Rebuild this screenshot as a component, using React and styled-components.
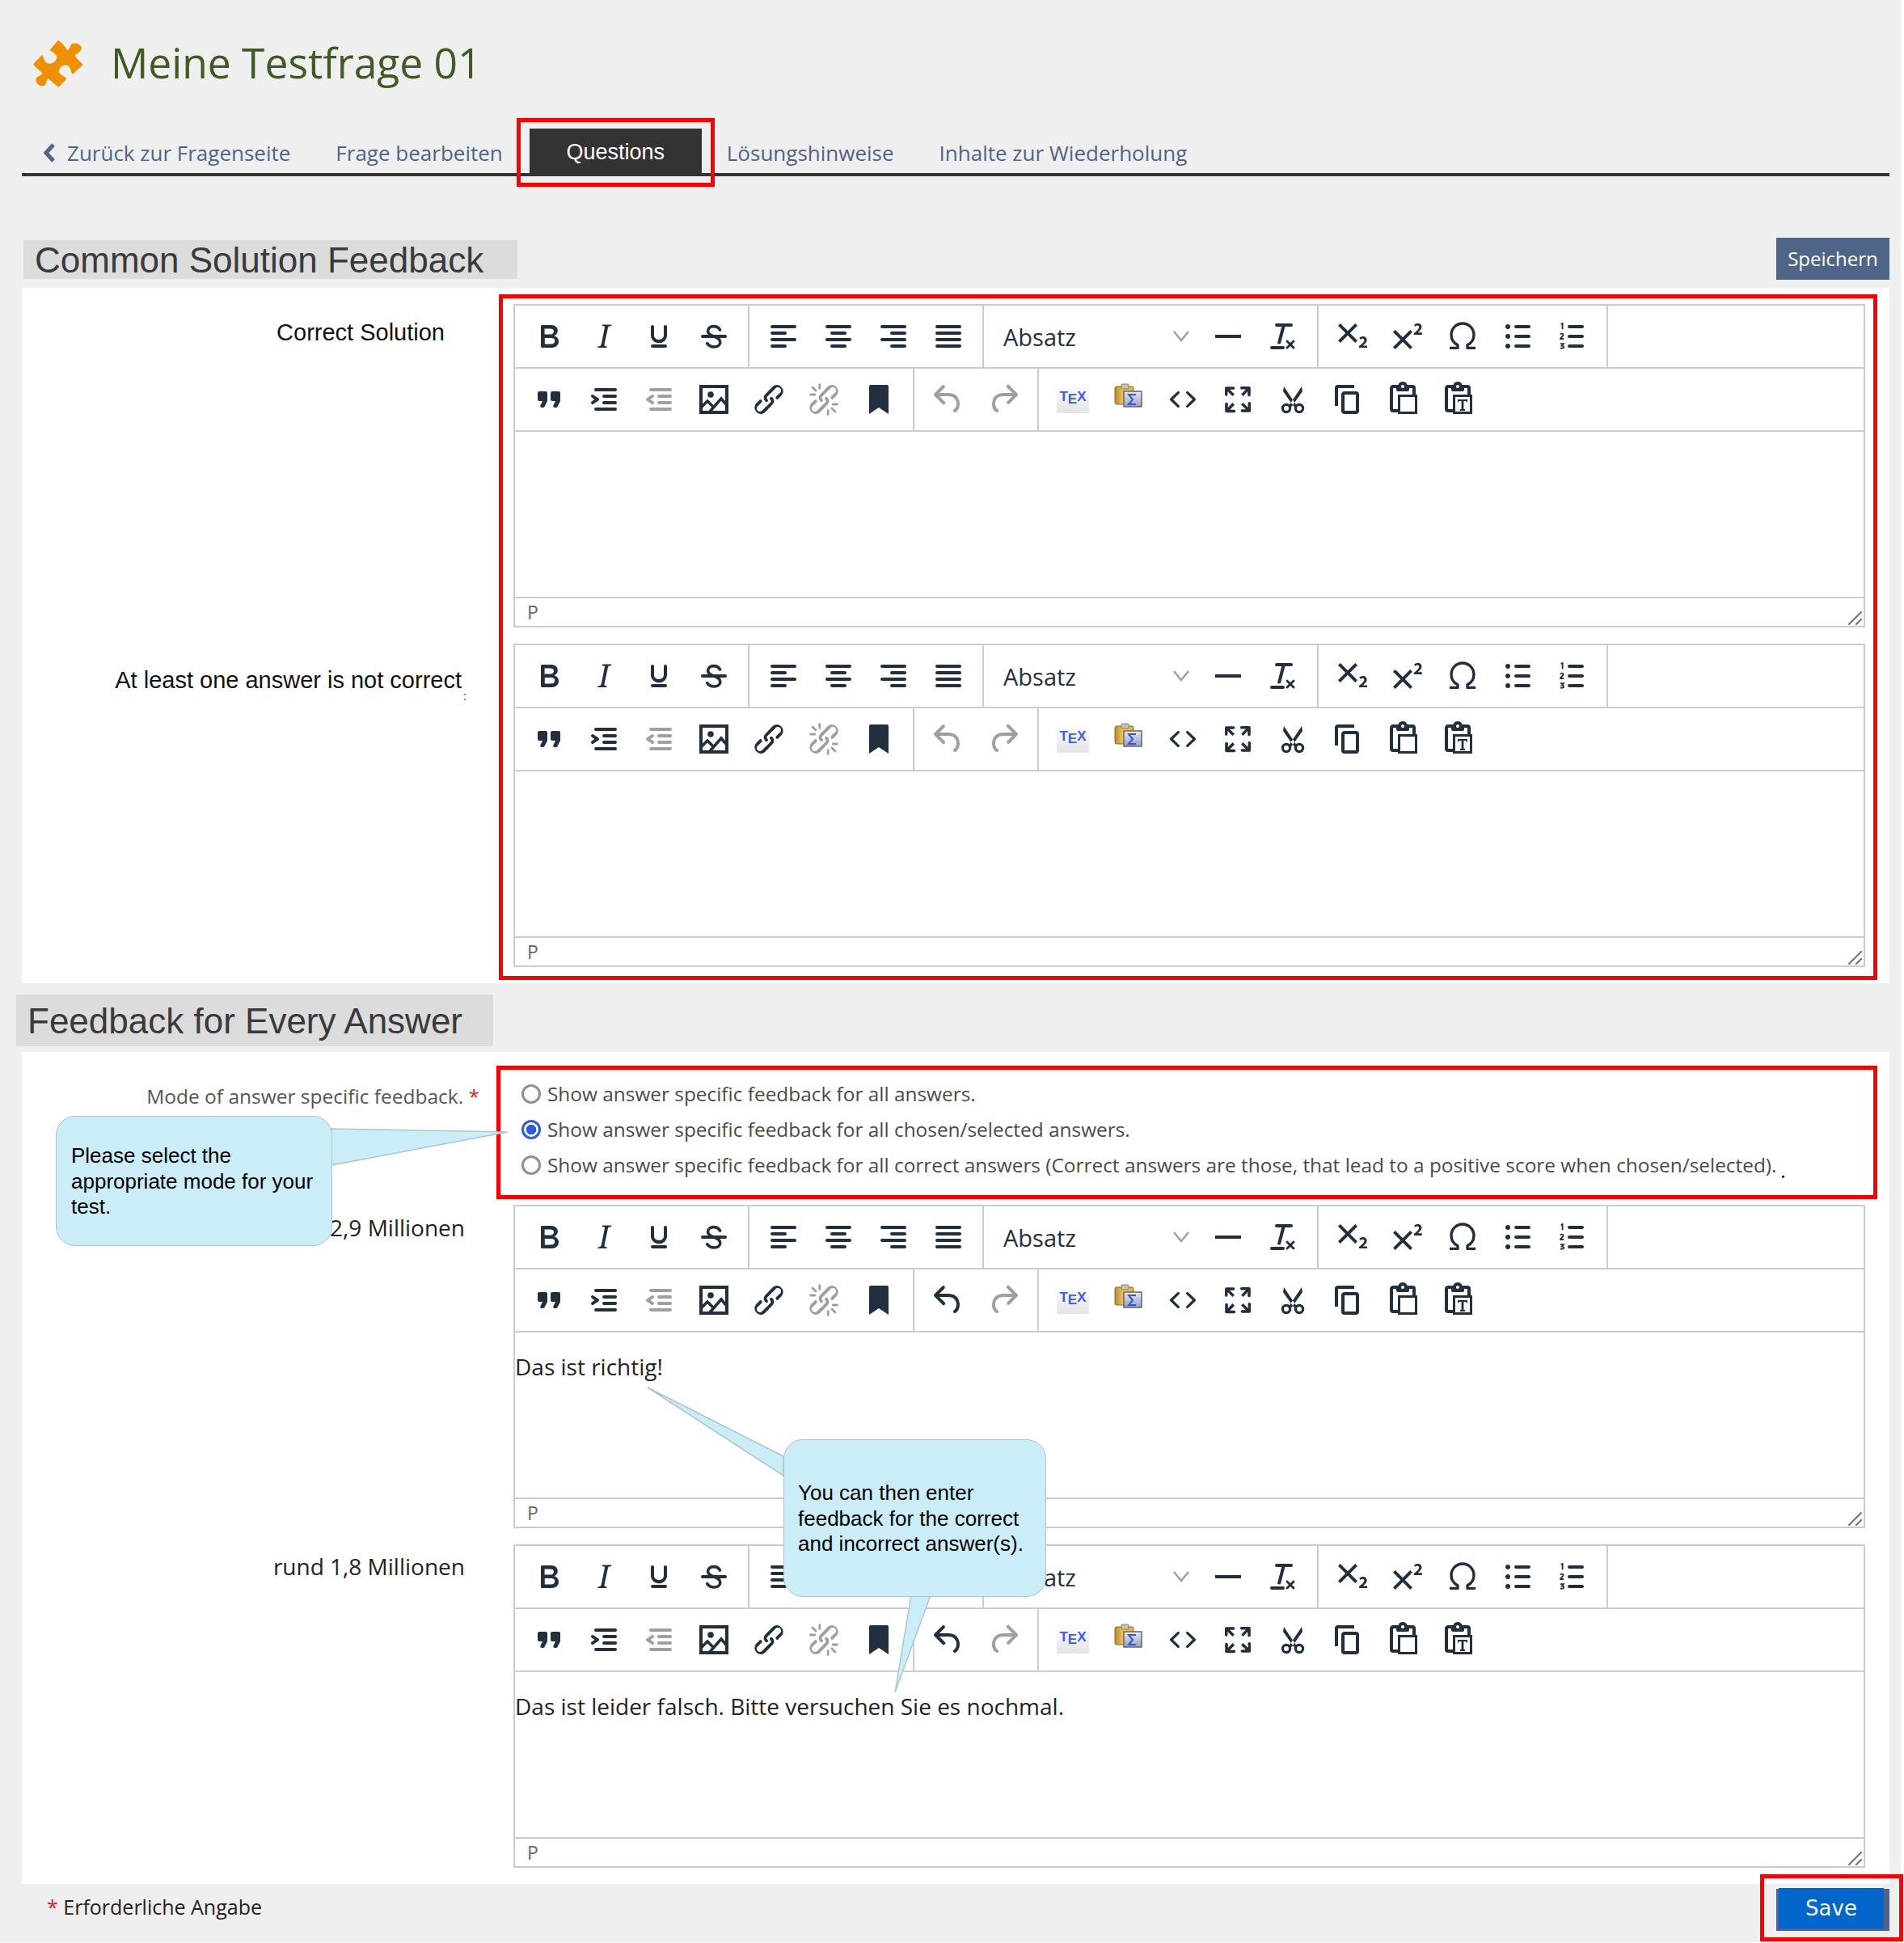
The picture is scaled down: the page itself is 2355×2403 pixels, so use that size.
import React from 'react';
import styled, { createGlobalStyle } from 'styled-components';

const GlobalStyle = createGlobalStyle`
  body {
    margin: 0;
    background: #ffffff;
    font-family: 'Open Sans', sans-serif;
  }
`;

const P = {
  bold: 'M7.8 19c-.3 0-.5 0-.6-.2l-.2-.5V5.7c0-.2 0-.4.2-.5l.6-.2h5c1.5 0 2.7.3 3.5 1 .7.6 1.1 1.4 1.1 2.5a3 3 0 0 1-.6 1.9c-.4.6-1 1-1.6 1.2.4.1.9.3 1.3.6s.8.7 1 1.2c.4.4.5 1 .5 1.6 0 1.3-.4 2.3-1.3 3-.8.7-2.1 1-3.8 1H7.8zm5-8.3c.6 0 1.2-.1 1.6-.5.4-.3.6-.7.6-1.3 0-1.1-.8-1.7-2.4-1.7H9.3v3.5h3.4zm.5 6c.7 0 1.3-.1 1.7-.4.4-.4.6-.9.6-1.5s-.2-1-.7-1.4c-.4-.3-1-.4-2-.4H9.4v3.8h4z',
  italic: 'M16.7 4.7l-.1.9h-.3c-.6 0-1 0-1.4.3-.3.3-.4.6-.5 1.1l-2.1 9.8v.6c0 .5.4.8 1.4.8h.2l-.2.8H8l.2-.8h.2c1.1 0 1.8-.5 2-1.5l2-9.8.1-.5c0-.6-.4-.8-1.4-.8h-.3l.2-.9h5.8z',
  underline: 'M16 5c.6 0 1 .4 1 1v5.5a4 4 0 0 1-.4 1.8l-1 1.4a5.3 5.3 0 0 1-5.5 1 5 5 0 0 1-1.6-1c-.5-.4-.8-.9-1.1-1.4a4 4 0 0 1-.4-1.8V6c0-.6.4-1 1-1s1 .4 1 1v5.5c0 .3 0 .6.2 1l.6.7a3.3 3.3 0 0 0 2.2.8 3.4 3.4 0 0 0 2.2-.8c.3-.2.4-.5.6-.8l.2-.9V6c0-.6.4-1 1-1zM8 17h8c.6 0 1 .4 1 1s-.4 1-1 1H8a1 1 0 0 1 0-2z',
  alignLeft: 'M5 5h14c.6 0 1 .4 1 1s-.4 1-1 1H5a1 1 0 1 1 0-2zm0 4h8c.6 0 1 .4 1 1s-.4 1-1 1H5a1 1 0 1 1 0-2zm0 8h8c.6 0 1 .4 1 1s-.4 1-1 1H5a1 1 0 0 1 0-2zm0-4h14c.6 0 1 .4 1 1s-.4 1-1 1H5a1 1 0 0 1 0-2z',
  alignCenter: 'M5 5h14c.6 0 1 .4 1 1s-.4 1-1 1H5a1 1 0 1 1 0-2zm3 4h8c.6 0 1 .4 1 1s-.4 1-1 1H8a1 1 0 1 1 0-2zm0 8h8c.6 0 1 .4 1 1s-.4 1-1 1H8a1 1 0 0 1 0-2zm-3-4h14c.6 0 1 .4 1 1s-.4 1-1 1H5a1 1 0 0 1 0-2z',
  alignRight: 'M5 5h14c.6 0 1 .4 1 1s-.4 1-1 1H5a1 1 0 1 1 0-2zm6 4h8c.6 0 1 .4 1 1s-.4 1-1 1h-8a1 1 0 0 1 0-2zm0 8h8c.6 0 1 .4 1 1s-.4 1-1 1h-8a1 1 0 0 1 0-2zm-6-4h14c.6 0 1 .4 1 1s-.4 1-1 1H5a1 1 0 0 1 0-2z',
  alignJustify: 'M5 5h14c.6 0 1 .4 1 1s-.4 1-1 1H5a1 1 0 1 1 0-2zm0 4h14c.6 0 1 .4 1 1s-.4 1-1 1H5a1 1 0 1 1 0-2zm0 4h14c.6 0 1 .4 1 1s-.4 1-1 1H5a1 1 0 0 1 0-2zm0 4h14c.6 0 1 .4 1 1s-.4 1-1 1H5a1 1 0 0 1 0-2z',
  hr: 'M4 11h16v2H4z',
  clear: 'M13.2 6l-2.6 10a1 1 0 0 1-1 .8h-.2a.8.8 0 0 1-.8-1l2.5-9.8H8a1 1 0 1 1 0-2h9a1 1 0 0 1 0 2h-3.8zM5 18h7a1 1 0 0 1 0 2H5a1 1 0 0 1 0-2zm13 1.5L16.5 18 15 19.5a.7.7 0 0 1-1-1l1.5-1.5-1.5-1.5a.7.7 0 0 1 1-1l1.5 1.5 1.5-1.5a.7.7 0 0 1 1 1L17.5 17l1.5 1.5a.7.7 0 0 1-1 1z',
  sub: 'M10.4 10l4.6 4.6-1.4 1.4L9 11.4 4.4 16 3 14.6 7.6 10 3 5.4 4.4 4 9 8.6 13.6 4 15 5.4 10.4 10zM21 19h-5v-1l1-.8 1.7-1.6c.3-.4.5-.8.5-1.2 0-.3 0-.6-.2-.7-.2-.2-.5-.3-.9-.3a2 2 0 0 0-.8.2l-.7.3-.4-1.1 1-.6 1.2-.2c.8 0 1.4.3 1.8.7.4.4.6.9.6 1.5s-.2 1.1-.5 1.6a8 8 0 0 1-1.3 1.3l-.6.6h2.6V19z',
  sup: 'M15 9.4L10.4 14l4.6 4.6-1.4 1.4L9 15.4 4.4 20 3 18.6 7.6 14 3 9.4 4.4 8 9 12.6 13.6 8 15 9.4zm5.9 1.6h-5v-1l1-.8 1.7-1.6c.3-.5.5-.9.5-1.3 0-.3 0-.5-.2-.7-.2-.2-.5-.3-.9-.3l-.8.2-.7.4-.4-1.2c.2-.2.5-.4 1-.5.3-.2.8-.2 1.2-.2.8 0 1.4.2 1.8.6.4.4.6 1 .6 1.6 0 .5-.2 1-.5 1.5l-1.3 1.4-.6.5h2.6V11z',
  bullets: 'M11 5h8c.6 0 1 .4 1 1s-.4 1-1 1h-8a1 1 0 0 1 0-2zm0 6h8c.6 0 1 .4 1 1s-.4 1-1 1h-8a1 1 0 0 1 0-2zm0 6h8c.6 0 1 .4 1 1s-.4 1-1 1h-8a1 1 0 0 1 0-2zM4.5 6c0-.4.1-.8.4-1 .3-.4.7-.5 1.1-.5s.8.1 1 .4c.4.3.5.7.5 1.1s-.1.8-.4 1c-.3.4-.7.5-1.1.5s-.8-.1-1-.4c-.4-.3-.5-.7-.5-1.1zm0 6c0-.4.1-.8.4-1 .3-.4.7-.5 1.1-.5s.8.1 1 .4c.4.3.5.7.5 1.1s-.1.8-.4 1c-.3.4-.7.5-1.1.5s-.8-.1-1-.4c-.4-.3-.5-.7-.5-1.1zm0 6c0-.4.1-.8.4-1 .3-.4.7-.5 1.1-.5s.8.1 1 .4c.4.3.5.7.5 1.1s-.1.8-.4 1c-.3.4-.7.5-1.1.5s-.8-.1-1-.4c-.4-.3-.5-.7-.5-1.1z',
  numLines: 'M10 17h8c.6 0 1 .4 1 1s-.4 1-1 1h-8a1 1 0 0 1 0-2zm0-6h8c.6 0 1 .4 1 1s-.4 1-1 1h-8a1 1 0 0 1 0-2zm0-6h8c.6 0 1 .4 1 1s-.4 1-1 1h-8a1 1 0 1 1 0-2z',
  quote: 'M7.5 17h.9c.4 0 .7-.2.9-.6L11 13V8c0-.6-.4-1-1-1H6a1 1 0 0 0-1 1v4c0 .6.4 1 1 1h2l-1.3 2.7a1 1 0 0 0 .8 1.3zm8 0h.9c.4 0 .7-.2.9-.6L19 13V8c0-.6-.4-1-1-1h-4a1 1 0 0 0-1 1v4c0 .6.4 1 1 1h2l-1.3 2.7a1 1 0 0 0 .8 1.3z',
  indent: 'M7 5h12c.6 0 1 .4 1 1s-.4 1-1 1H7a1 1 0 1 1 0-2zm5 4h7c.6 0 1 .4 1 1s-.4 1-1 1h-7a1 1 0 0 1 0-2zm0 4h7c.6 0 1 .4 1 1s-.4 1-1 1h-7a1 1 0 0 1 0-2zm-5 4h12a1 1 0 0 1 0 2H7a1 1 0 0 1 0-2zm-2.6-3.8L6.2 12l-1.8-1.2a1 1 0 0 1 1.2-1.6l3 2a1 1 0 0 1 0 1.6l-3 2a1 1 0 1 1-1.2-1.6z',
  outdent: 'M7 5h12c.6 0 1 .4 1 1s-.4 1-1 1H7a1 1 0 1 1 0-2zm5 4h7c.6 0 1 .4 1 1s-.4 1-1 1h-7a1 1 0 0 1 0-2zm0 4h7c.6 0 1 .4 1 1s-.4 1-1 1h-7a1 1 0 0 1 0-2zm-5 4h12a1 1 0 0 1 0 2H7a1 1 0 0 1 0-2zm1.6-3.8a1 1 0 0 1-1.2 1.6l-3-2a1 1 0 0 1 0-1.6l3-2a1 1 0 0 1 1.2 1.6L6.8 12l1.8 1.2z',
  link: 'M6.2 12.3a1 1 0 0 1 1.4 1.4l-2 2a2 2 0 1 0 2.6 2.8l4.8-4.8a1 1 0 0 0 0-1.4 1 1 0 1 1 1.4-1.3 2.9 2.9 0 0 1 0 4L9.6 20a3.9 3.9 0 0 1-5.5-5.5l2-2zm11.6-.6a1 1 0 0 1-1.4-1.4l2-2a2 2 0 1 0-2.6-2.8L11 10.3a1 1 0 0 0 0 1.4A1 1 0 1 1 9.6 13a2.9 2.9 0 0 1 0-4L14.4 4a3.9 3.9 0 0 1 5.5 5.5l-2 2z',
  bookmark: 'M6 4v17l6-4 6 4V4c0-.6-.4-1-1-1H7a1 1 0 0 0-1 1z',
  undo: 'M6.4 8H12c3.7 0 6.2 2 6.8 5.1.6 2.7-.4 5.6-2.3 6.8a1 1 0 0 1-1-1.8c1.1-.7 1.8-2.7 1.4-4.6-.5-2.1-2.1-3.5-4.9-3.5H6.4l3.3 3.3a1 1 0 1 1-1.4 1.4l-5-5a1 1 0 0 1 0-1.4l5-5a1 1 0 0 1 1.4 1.4L6.4 8z',
  redo: 'M17.6 10H12c-2.8 0-4.4 1.4-4.9 3.5-.4 2 .3 3.9 1.4 4.6a1 1 0 1 1-1 1.8c-2-1.2-2.9-4.1-2.3-6.8.6-3 3-5.1 6.8-5.1h5.6l-3.3-3.3a1 1 0 1 1 1.4-1.4l5 5a1 1 0 0 1 0 1.4l-5 5a1 1 0 0 1-1.4-1.4l3.3-3.3z',
  code: 'M9.8 15.7c.3.3.3.8 0 1-.3.4-.9.4-1.2 0l-4.4-4.1a.8.8 0 0 1 0-1.2l4.4-4.2c.3-.3.9-.3 1.2 0 .3.3.3.8 0 1.1L6 12l3.8 3.7zm4.4 0l3.8-3.7-3.8-3.7a.8.8 0 0 1 0-1.1c.3-.3.9-.3 1.2 0l4.4 4.2c.3.3.3.9 0 1.2l-4.4 4.1c-.3.4-.9.4-1.2 0a.8.8 0 0 1 0-1z',
  fullscreen: 'M15.3 10l-1.2-1.3 2.9-3h-2.3a.9.9 0 1 1 0-1.7H19c.5 0 .9.4.9.9v4.4a.9.9 0 1 1-1.8 0V7l-2.8 3zm0 4l3 3v-2.3a.9.9 0 1 1 1.7 0V19c0 .5-.4.9-.9.9h-4.4a.9.9 0 1 1 0-1.8H17l-3-2.9 1.3-1.2zM10 15.4l-2.9 3h2.3a.9.9 0 1 1 0 1.7H5a.9.9 0 0 1-.9-.9v-4.4a.9.9 0 1 1 1.8 0V17l2.9-3 1.2 1.4zM8.7 10L5.7 7v2.3a.9.9 0 0 1-1.7 0V5c0-.5.4-.9.9-.9h4.4a.9.9 0 0 1 0 1.8H7l3 2.9-1.3 1.2z',
  copy: 'M16 3H6a2 2 0 0 0-2 2v11h2V5h10V3zm1 4a2 2 0 0 1 2 2v10a2 2 0 0 1-2 2h-7a2 2 0 0 1-2-2V9c0-1.2.9-2 2-2h7zm0 12V9h-7v10h7z',
  paste: 'M18 9V5h-2v1c0 .6-.4 1-1 1H9a1 1 0 0 1-1-1V5H6v13h3V9h9zM9 20H6a2 2 0 0 1-2-2V5c0-1.1.9-2 2-2h3.2A3 3 0 0 1 12 1a3 3 0 0 1 2.8 2H18a2 2 0 0 1 2 2v4h1v12H9v-1zm1.5-9.5v9h9v-9h-9zM12 3a1 1 0 0 0-1 1c0 .5.4 1 1 1s1-.5 1-1-.4-1-1-1z',
};

function Glyph({ d, children }) {
  return (
    <svg width="48" height="48" viewBox="0 0 24 24" fill="currentColor">
      {d && <path d={d} fillRule="evenodd" />}
      {children}
    </svg>
  );
}

function PasteMathIcon() {
  return (
    <BlurredIcon width="48" height="48" viewBox="0 0 48 48">
      <defs>
        <linearGradient id="clipFill" x1="0" y1="0" x2="1" y2="0">
          <stop offset="0" stopColor="#b98a30" />
          <stop offset="0.5" stopColor="#f4cd60" />
          <stop offset="1" stopColor="#e0a93a" />
        </linearGradient>
        <linearGradient id="sigmaFill" x1="0" y1="0" x2="0" y2="1">
          <stop offset="0" stopColor="#e6ebf4" />
          <stop offset="1" stopColor="#8fa2c9" />
        </linearGradient>
      </defs>
      <rect x="8" y="10" width="23" height="22" rx="2" fill="url(#clipFill)" stroke="#8a6d2b" />
      <rect x="16" y="7" width="9" height="6" rx="1" fill="#c9c2ac" stroke="#8a7f5d" />
      <rect x="19" y="16" width="22" height="19" fill="url(#sigmaFill)" stroke="#6b6560" strokeWidth="1.500" />
      <path d="M34 20h-9l5 6-5 6h9" fill="none" stroke="#3a55c8" strokeWidth="2" />
    </BlurredIcon>
  );
}

const lineProps = { fill: 'none', stroke: 'currentColor', strokeWidth: 1.8, strokeLinecap: 'round', strokeLinejoin: 'round' };

const icons = {
  bold: <Glyph d={P.bold} />,
  italic: <Glyph d={P.italic} />,
  underline: <Glyph d={P.underline} />,
  strike: (
    <Glyph>
      <path {...lineProps} d="M15.8 8c-.8-1.400-2.200-2.200-3.900-2.200-2.300 0-3.600 1.300-3.600 2.900 0 1.700 1.500 2.500 3.700 3.300 2.600.9 3.900 2 3.900 3.600 0 1.700-1.500 2.900-3.800 2.900-1.900 0-3.300-.8-4.300-2.200" />
      <path d="M5 11h14c.6 0 1 .4 1 1s-.4 1-1 1H5a1 1 0 0 1 0-2z" />
    </Glyph>
  ),
  alignLeft: <Glyph d={P.alignLeft} />,
  alignCenter: <Glyph d={P.alignCenter} />,
  alignRight: <Glyph d={P.alignRight} />,
  alignJustify: <Glyph d={P.alignJustify} />,
  hr: <Glyph d={P.hr} />,
  clear: <Glyph d={P.clear} />,
  sub: <Glyph d={P.sub} />,
  sup: <Glyph d={P.sup} />,
  omega: (
    <Glyph>
      <path {...lineProps} strokeLinecap="butt" strokeWidth="1.7" d="M4 19.200h5v-1.800C6.500 16.100 5 13.800 5 11a7 7 0 0 1 14 0c0 2.800-1.500 5.100-4 6.400v1.800h5" />
    </Glyph>
  ),
  bullets: <Glyph d={P.bullets} />,
  numbers: (
    <Glyph d={P.numLines}>
      <path fill="none" stroke="currentColor" strokeWidth="0.9" d="M4.800 4.500l1-.5v3.600M4.500 10.800c.2-.6 1.800-.7 1.800.3 0 .9-1.800 1.400-1.800 2.400h2M4.500 16.600h1.900l-1 1.200c1 0 1.200.4 1.200.8 0 .8-1.400 1-2.100.5" />
    </Glyph>
  ),
  quote: <Glyph d={P.quote} />,
  indent: <Glyph d={P.indent} />,
  outdent: <Glyph d={P.outdent} />,
  image: (
    <Glyph>
      <rect x="4" y="4" width="16" height="16" fill="none" stroke="currentColor" strokeWidth="2" />
      <circle cx="10" cy="9" r="1.900" />
      <path {...lineProps} strokeLinecap="butt" strokeLinejoin="miter" d="M4.500 16.500l3.500-3.500 4 4M9.500 19.500l7-8 3 3.500" />
    </Glyph>
  ),
  link: <Glyph d={P.link} />,
  unlink: (
    <Glyph d={P.link}>
      <path {...lineProps} strokeWidth="1.400" d="M5 4.500l2 2M3.800 9h2.600M9.400 2.800v2.400M19 19.500l-2-2M20.200 15h-2.600M14.600 21.200v-2.400" />
    </Glyph>
  ),
  bookmark: <Glyph d={P.bookmark} />,
  undo: <Glyph d={P.undo} />,
  redo: <Glyph d={P.redo} />,
  code: <Glyph d={P.code} />,
  fullscreen: <Glyph d={P.fullscreen} />,
  cut: (
    <Glyph>
      <circle cx="8" cy="17.500" r="2.300" fill="none" stroke="currentColor" strokeWidth="1.600" />
      <circle cx="16" cy="17.500" r="2.300" fill="none" stroke="currentColor" strokeWidth="1.600" />
      <path d="M6.500 4l7.700 11.500-1.500 1L6 7zM17.500 4l-7.700 11.500 1.500 1L18 7z" />
    </Glyph>
  ),
  copy: <Glyph d={P.copy} />,
  paste: <Glyph d={P.paste} />,
  pasteText: (
    <Glyph d={P.paste}>
      <path d="M12 12h6v1.800h-.7v-.8h-1.600v5h.8v1h-3v-1h.8v-5h-1.600v.8H12z" />
    </Glyph>
  ),
  pasteMath: <PasteMathIcon />,
};

const GROUPS_TOP = [
  [['bold'], ['italic'], ['underline'], ['strike']],
  [['alignLeft'], ['alignCenter'], ['alignRight'], ['alignJustify']],
  ['select', ['hr'], ['clear']],
  [['sub'], ['sup'], ['omega'], ['bullets'], ['numbers']],
];

function Btn({ name, off }) {
  return <IconButton $off={off}>{icons[name]}</IconButton>;
}

function Editor({ undoOn, text }) {
  return (
    <EditorBox>
      <ToolRow>
        {GROUPS_TOP.map((group, i) => (
          <ToolGroup key={i}>
            {group.map((item, j) =>
              item === 'select' ? (
                <BlockSelect key={j}>
                  Absatz
                  <SelectArrow width="24" height="24" viewBox="0 0 24 24">
                    <path d="M3 6l9 11 9-11" fill="none" stroke="currentColor" strokeWidth="2.400" />
                  </SelectArrow>
                </BlockSelect>
              ) : (
                <Btn key={j} name={item[0]} />
              )
            )}
          </ToolGroup>
        ))}
      </ToolRow>
      <ToolRow>
        <ToolGroup>
          <Btn name="quote" />
          <Btn name="indent" />
          <Btn name="outdent" off />
          <Btn name="image" />
          <Btn name="link" />
          <Btn name="unlink" off />
          <Btn name="bookmark" />
        </ToolGroup>
        <ToolGroup>
          <Btn name="undo" off={!undoOn} />
          <Btn name="redo" off />
        </ToolGroup>
        <ToolGroup>
          <IconButton>
            <TexIcon>
              T<TexE>E</TexE>X
            </TexIcon>
          </IconButton>
          <Btn name="pasteMath" />
          <Btn name="code" />
          <Btn name="fullscreen" />
          <Btn name="cut" />
          <Btn name="copy" />
          <Btn name="paste" />
          <Btn name="pasteText" />
        </ToolGroup>
      </ToolRow>
      <EditArea>{text}</EditArea>
      <StatusBar>
        P
        <ResizeHandle width="20" height="20" viewBox="0 0 20 20">
          <path d="M2 18L17 3M11 18l6-6" stroke="#6f7780" strokeWidth="2.200" fill="none" strokeLinecap="round" />
        </ResizeHandle>
      </StatusBar>
    </EditorBox>
  );
}

export default function App() {
  return (
    <Page>
      <GlobalStyle />
      <TitleRow>
        <svg width="90" height="80" viewBox="0 0 270 240">
          <path
            fill="#f09000"
            d="M125 30C135 32 155 55 158 65C165 70 170 55 172 48C180 35 205 40 212 55C216 70 195 78 188 85C190 95 210 110 218 120L180 155C172 150 175 130 160 122C140 118 125 135 130 150C135 160 155 165 157 172L128 203C115 195 100 180 88 172C80 178 85 190 75 197C60 205 42 190 43 175C45 162 65 160 67 153C60 143 40 130 33 118L65 85C75 90 70 105 85 115C105 120 125 105 120 88C115 75 98 72 95 65Z"
          />
        </svg>
        <Title>Meine Testfrage 01</Title>
      </TitleRow>

      <Tabs>
        <Tab>
          <BackArrow width="16" height="24" viewBox="0 0 16 24">
            <path d="M13 2L4 12l9 10" fill="none" stroke="currentColor" strokeWidth="5" />
          </BackArrow>
          Zurück zur Fragenseite
        </Tab>
        <Tab>Frage bearbeiten</Tab>
        <ActiveTab>
          Questions
          <TabMark />
        </ActiveTab>
        <Tab>Lösungshinweise</Tab>
        <Tab>Inhalte zur Wiederholung</Tab>
      </Tabs>

      <HeadingRow>
        <SectionHeading $w={611} $h={48} $ml={2} $pl={14}>
          Common Solution Feedback
        </SectionHeading>
        <SaveTop>Speichern</SaveTop>
      </HeadingRow>

      <Panel>
        <HighlightBox $top={8} $left={590} $w={1705} $h={848} />
        <FormRow>
          <SansLabel $pr={85} $pt={19}>Correct Solution</SansLabel>
          <Editor />
        </FormRow>
        <FormRow>
          <SansLabel $pr={64} $pt={29}>
            At least one answer is not correct
            <StrayTick>:</StrayTick>
          </SansLabel>
          <Editor />
        </FormRow>
      </Panel>

      <SectionHeading $w={590} $h={64} $ml={-7} $mt={14} $pl={14}>
        Feedback for Every Answer
      </SectionHeading>

      <Panel $mt={7}>
        <HighlightBox $top={17} $left={587} $w={1708} $h={165} />
        <FormRow>
          <ModeLabel>
            Mode of answer specific feedback. <Required>*</Required>
          </ModeLabel>
          <RadioList>
            <RadioRow>
              <Radio />
              Show answer specific feedback for all answers.
            </RadioRow>
            <RadioRow>
              <Radio $on />
              Show answer specific feedback for all chosen/selected answers.
            </RadioRow>
            <RadioRow>
              <Radio />
              Show answer specific feedback for all correct answers (Correct answers are those, that lead to a positive score when chosen/selected).
              <StrayDot>.</StrayDot>
            </RadioRow>
          </RadioList>
        </FormRow>
        <FormRow>
          <AnswerLabel $pt={9}>2,9 Millionen</AnswerLabel>
          <Editor undoOn text="Das ist richtig!" />
        </FormRow>
        <FormRow>
          <AnswerLabel $pt={8}>rund 1,8 Millionen</AnswerLabel>
          <Editor undoOn text="Das ist leider falsch. Bitte versuchen Sie es nochmal." />
        </FormRow>

        <Tail $left={381} $top={93} width="224" height="52" viewBox="0 0 224 52">
          <polygon points="2,2 220,6 2,47" />
        </Tail>
        <Callout $left={42} $top={79} $w={342} $h={161} $pt={33} $pl={18}>
          Please select the
          <br />
          appropriate mode for your
          <br />
          test.
        </Callout>

        <Tail $left={772} $top={413} width="172" height="112" viewBox="0 0 172 112">
          <polygon points="2,2 170,87 170,111" />
        </Tail>
        <Tail $left={1078} $top={670} width="48" height="124" viewBox="0 0 48 124">
          <polygon points="22,2 46,2 2,122" />
        </Tail>
        <Callout $left={942} $top={479} $w={325} $h={195} $pt={50} $pl={17}>
          You can then enter
          <br />
          feedback for the correct
          <br />
          and incorrect answer(s).
        </Callout>
      </Panel>

      <FooterRow>
        <RequiredNote>
          <Required>*</Required> Erforderliche Angabe
        </RequiredNote>
        <SaveBack>
          <SaveHighlight />
          <SaveButton>Save</SaveButton>
        </SaveBack>
      </FooterRow>
    </Page>
  );
}

const Page = styled.div`
  position: relative;
  width: 2351px;
  height: 2402px;
  box-sizing: border-box;
  padding-left: 27px;
  background: #efefef;
`;

const TitleRow = styled.div`
  height: 159px;
  display: flex;
  align-items: center;
  padding-left: 3px;
`;

const Title = styled.h1`
  margin: -6px 0 0 17px;
  font-family: 'Open Sans', sans-serif;
  font-weight: 400;
  font-size: 51.5px;
  color: #3f5a22;
`;

const BlurredIcon = styled.svg`
  filter: blur(0.6px);
  margin-top: -4px;
`;

const Tabs = styled.div`
  width: 2310px;
  height: 59px;
  box-sizing: border-box;
  display: flex;
  border-bottom: 4px solid #333333;
`;

const Tab = styled.div`
  display: flex;
  align-items: center;
  gap: 14px;
  height: 60px;
  padding: 0 28px;
  font-size: 26px;
  color: #4f6587;
  &:first-child {
    padding-left: 26px;
  }
`;

const BackArrow = styled.svg`
  flex: none;
`;

const ActiveTab = styled.div`
  position: relative;
  width: 213px;
  height: 59px;
  margin: 0 3px 0 5px;
  box-sizing: border-box;
  background: #333333;
  color: #ffffff;
  display: flex;
  align-items: center;
  justify-content: center;
  font-family: 'Liberation Sans', sans-serif;
  font-size: 27px;
`;

const TabMark = styled.div`
  position: absolute;
  left: -16px;
  top: -13px;
  width: 245px;
  height: 85px;
  box-sizing: border-box;
  border: 5px solid #ff0000;
`;

const HeadingRow = styled.div`
  width: 2310px;
  margin-top: 76px;
  display: flex;
  justify-content: space-between;
  align-items: flex-start;
`;

const SectionHeading = styled.h2`
  box-sizing: border-box;
  width: ${(p) => p.$w}px;
  height: ${(p) => p.$h}px;
  margin: ${(p) => p.$mt || 3}px 0 0 ${(p) => p.$ml}px;
  padding-left: ${(p) => p.$pl}px;
  display: flex;
  align-items: center;
  background: #dcdcdc;
  color: #3a3a3a;
  font-family: 'Liberation Sans', sans-serif;
  font-weight: 400;
  font-size: 44px;
  line-height: 50px;
  padding-top: 2px;
`;

const SaveTop = styled.button`
  width: 140px;
  height: 52px;
  border: none;
  padding: 0 0 2px;
  background: #4f6587;
  color: #ffffff;
  font-family: 'Open Sans', sans-serif;
  font-size: 24px;
`;

const Panel = styled.div`
  position: relative;
  width: 2310px;
  margin-top: ${(p) => p.$mt || 10}px;
  padding: 20px 0;
  box-sizing: border-box;
  background: #ffffff;
  display: flex;
  flex-direction: column;
  gap: 20px;
`;

const HighlightBox = styled.div`
  position: absolute;
  top: ${(p) => p.$top}px;
  left: ${(p) => p.$left}px;
  width: ${(p) => p.$w}px;
  height: ${(p) => p.$h}px;
  box-sizing: border-box;
  border: 5px solid #ff0000;
`;

const FormRow = styled.div`
  display: grid;
  grid-template-columns: 608px 1672px;
`;

const SansLabel = styled.div`
  position: relative;
  text-align: right;
  padding: ${(p) => p.$pt}px ${(p) => p.$pr}px 0 0;
  font-family: 'Liberation Sans', sans-serif;
  font-size: 29px;
  line-height: 32px;
  color: #111111;
`;

const StrayTick = styled.span`
  position: absolute;
  right: 58px;
  top: 57px;
  font-size: 14px;
  line-height: 16px;
`;

const StrayDot = styled.span`
  position: absolute;
  left: 1567px;
  top: 108px;
  font-size: 26px;
  color: #111111;
`;

const ModeLabel = styled.div`
  text-align: right;
  padding: 18px 42px 0 0;
  font-size: 24.5px;
  line-height: 34px;
  color: #555555;
`;

const Required = styled.span`
  color: #e02020;
`;

const AnswerLabel = styled.div`
  text-align: right;
  padding: ${(p) => p.$pt}px 60px 0 0;
  font-size: 28px;
  line-height: 38px;
  color: #222222;
`;

const RadioList = styled.div`
  position: relative;
  padding: 9px 0 8px 10px;
  display: flex;
  flex-direction: column;
`;

const RadioRow = styled.div`
  height: 44px;
  display: flex;
  align-items: center;
  gap: 8px;
  font-size: 24.4px;
  color: #4a4a4a;
  white-space: nowrap;
`;

const Radio = styled.span`
  width: 24px;
  height: 24px;
  margin-top: 2px;
  box-sizing: border-box;
  flex: none;
  border-radius: 50%;
  border: 3px solid ${(p) => (p.$on ? '#2d5be3' : '#8f8f9d')};
  background: ${(p) => (p.$on ? 'radial-gradient(circle, #2d5be3 0 6px, #ffffff 6.500px)' : '#ffffff')};
`;

const EditorBox = styled.div`
  width: 1672px;
  height: 400px;
  box-sizing: border-box;
  border: 2px solid #cccccc;
  display: flex;
  flex-direction: column;
  background: #ffffff;
`;

const ToolRow = styled.div`
  height: 78px;
  flex: none;
  box-sizing: border-box;
  display: flex;
  border-bottom: 2px solid #cccccc;
`;

const ToolGroup = styled.div`
  display: flex;
  align-items: center;
  padding: 0 8px;
  border-right: 2px solid #cccccc;
  &:last-child {
    border-right: none;
  }
  ${ToolRow}:first-child &:last-child {
    border-right: 2px solid #cccccc;
  }
`;

const IconButton = styled.div`
  width: 68px;
  height: 68px;
  display: flex;
  align-items: center;
  justify-content: center;
  color: ${(p) => (p.$off ? '#9aa0a6' : '#222f3e')};
`;

const BlockSelect = styled.div`
  position: relative;
  width: 260px;
  height: 68px;
  box-sizing: border-box;
  padding-left: 16px;
  display: flex;
  align-items: center;
  font-size: 29px;
  color: #222f3e;
`;

const SelectArrow = styled.svg`
  position: absolute;
  left: 224px;
  top: 22px;
  color: #9aa0a6;
`;

const TexIcon = styled.div`
  width: 40px;
  height: 38px;
  margin-top: -4px;
  background: linear-gradient(#ffffff, #e4e4e4);
  color: #3d5bf0;
  font-family: 'Liberation Sans', sans-serif;
  font-size: 17px;
  font-weight: 700;
  text-align: center;
  line-height: 36px;
  white-space: nowrap;
`;

const TexE = styled.span`
  position: relative;
  top: 3px;
`;

const EditArea = styled.div`
  flex: 1;
  padding-top: 23px;
  font-size: 28px;
  line-height: 38px;
  color: #222222;
`;

const StatusBar = styled.div`
  position: relative;
  flex: none;
  height: 36px;
  box-sizing: border-box;
  border-top: 2px solid #cccccc;
  padding-left: 15px;
  display: flex;
  align-items: center;
  font-size: 23px;
  color: #666666;
`;

const ResizeHandle = styled.svg`
  position: absolute;
  right: 0;
  bottom: 0;
`;

const Tail = styled.svg`
  position: absolute;
  left: ${(p) => p.$left}px;
  top: ${(p) => p.$top}px;
  polygon {
    fill: #cbedf8;
    stroke: #a9c7cf;
    stroke-width: 1.500;
  }
`;

const Callout = styled.div`
  position: absolute;
  left: ${(p) => p.$left}px;
  top: ${(p) => p.$top}px;
  width: ${(p) => p.$w}px;
  height: ${(p) => p.$h}px;
  box-sizing: border-box;
  padding: ${(p) => p.$pt}px 0 0 ${(p) => p.$pl}px;
  border: 1.500px solid #a9c7cf;
  border-radius: 24px;
  background: #cbedf8;
  color: #000000;
  font-family: 'Liberation Sans', sans-serif;
  font-size: 26px;
  line-height: 31.500px;
`;

const FooterRow = styled.div`
  width: 2310px;
  height: 72px;
  display: flex;
  justify-content: space-between;
  align-items: flex-start;
`;

const RequiredNote = styled.div`
  padding: 11px 0 0 31px;
  font-size: 25px;
  line-height: 34px;
  color: #222222;
`;

const SaveBack = styled.div`
  position: relative;
  width: 140px;
  height: 52px;
  margin-top: 6px;
  background: #4f6587;
`;

const SaveHighlight = styled.div`
  position: absolute;
  left: -20px;
  top: -18px;
  width: 177px;
  height: 83px;
  box-sizing: border-box;
  border: 5px solid #ff0000;
`;

const SaveButton = styled.button`
  position: absolute;
  left: 3px;
  top: -1px;
  width: 130px;
  height: 50px;
  border: none;
  padding: 0;
  background: #0366cd;
  color: #f4f8fc;
  font-family: 'DejaVu Sans', sans-serif;
  font-size: 26px;
`;
